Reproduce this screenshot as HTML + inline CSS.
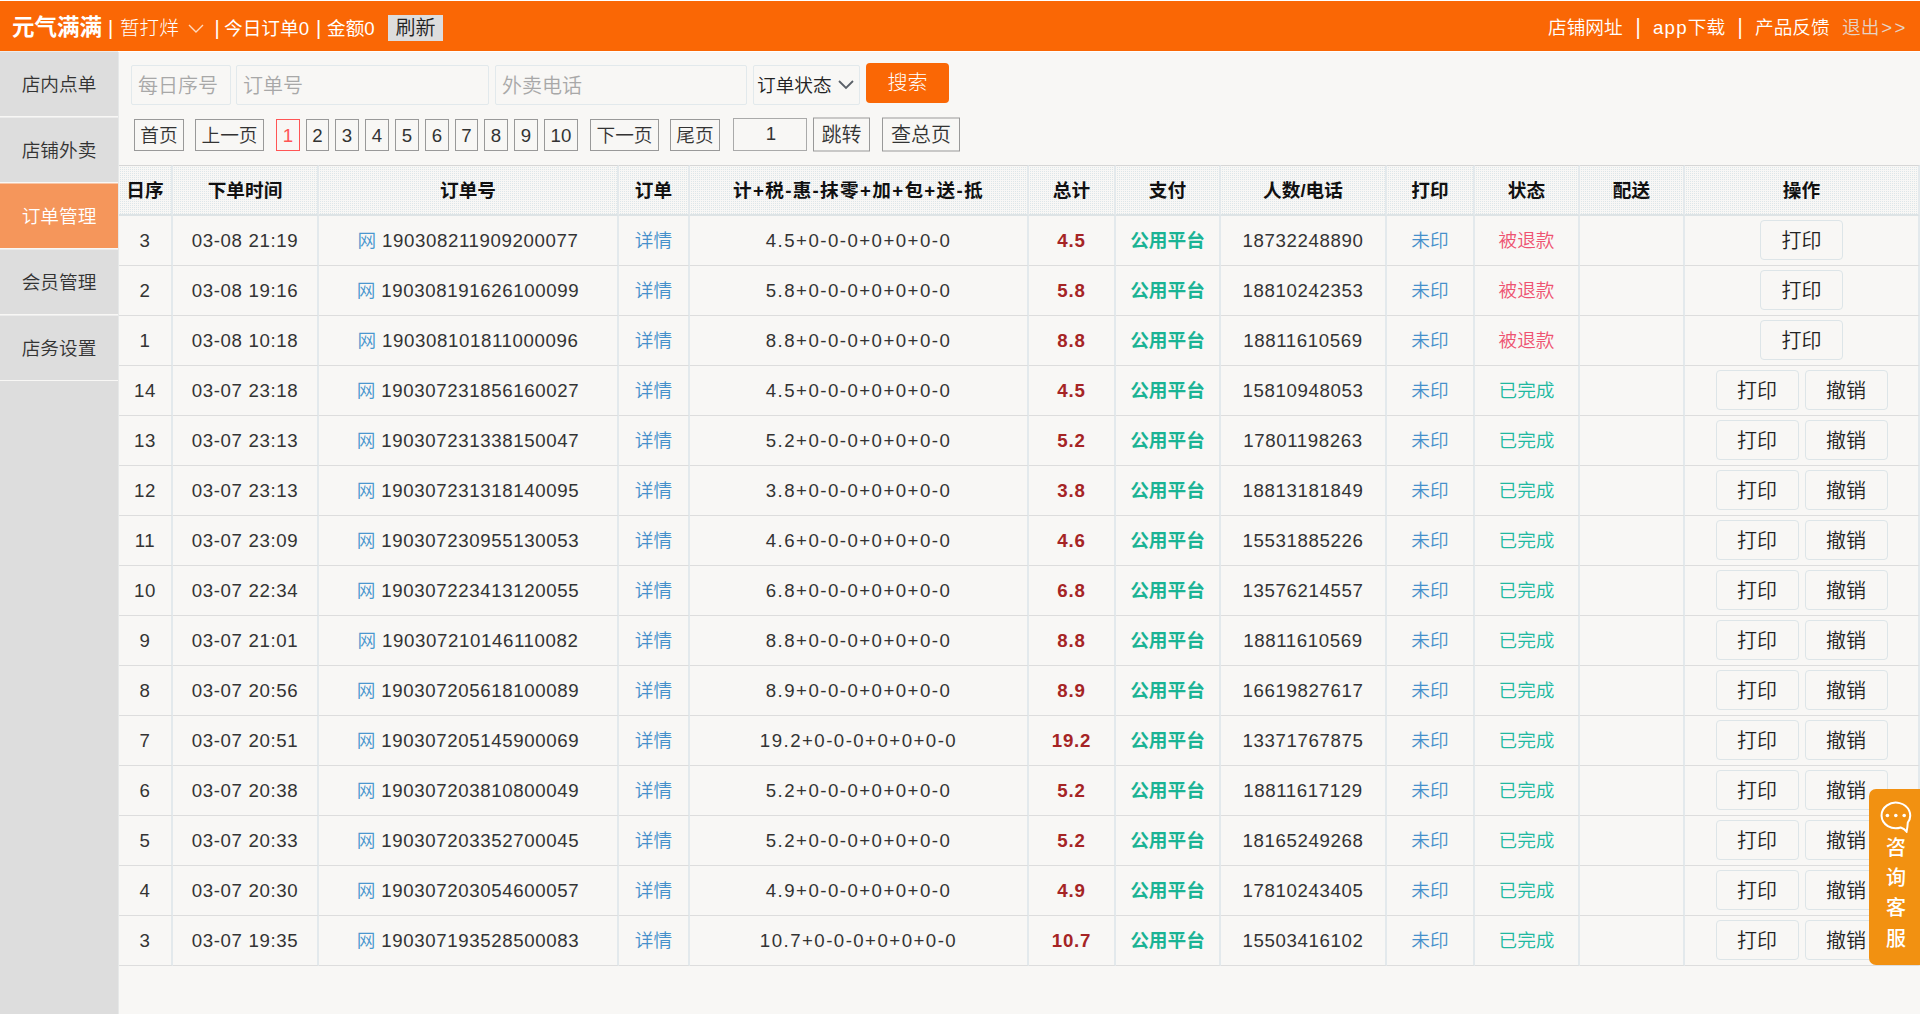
<!DOCTYPE html>
<html lang="zh-CN">
<head>
<meta charset="utf-8">
<title>订单管理</title>
<style>
*{box-sizing:border-box;margin:0;padding:0}
html,body{width:1920px;height:1014px;overflow:hidden}
body{background:#f8f7f5;font-family:"Liberation Sans","Noto Sans CJK SC",sans-serif;font-size:18.67px;font-weight:350;color:#333;position:relative}
.top{position:absolute;left:0;top:0;width:1920px;height:51px;background:#fa6705;border-top:1px solid #fff;color:#fff}
.top span,.top b,.top button,.top svg{position:absolute;white-space:nowrap}
.top .nm{left:12px;top:11px;font-size:22.5px;line-height:32px;font-weight:700}
.top .s1{left:108px;top:11px;line-height:32px;font-size:20px}
.top .st{left:120px;top:11px;line-height:32px;font-size:19.6px;font-weight:300}
.top .s2{left:214.5px;top:11px;line-height:32px;font-size:20px}
.top .td{left:224px;top:12px;line-height:32px;font-weight:400}
.top .s3{left:316px;top:11px;line-height:32px;font-size:20px}
.top .am{left:327px;top:12px;line-height:32px;font-weight:400}
.top .rf{left:388px;top:14px;width:55px;height:26px;background:#ddd;color:#222;border:0;padding:0;font:inherit;font-size:20px;line-height:27px;text-align:center}
.top .r1{margin-top:1px;left:1548px;top:10px;line-height:32px}
.top .r2{margin-top:1px;left:1653px;top:10px;line-height:32px}
.top .r3{margin-top:1px;left:1755px;top:10px;line-height:32px}
.top .r4{margin-top:1px;left:1842px;top:10px;line-height:32px;color:#e6d3c4}
.top .p1{left:1635.5px;top:10px;line-height:32px;font-size:20px;transform:scaleY(1.1);margin-top:-1px}
.top .p2{left:1737.5px;top:10px;line-height:32px;font-size:20px;transform:scaleY(1.1);margin-top:-1px}
.side{position:absolute;left:0;top:51px;width:119px;border-right:1px solid #e6e8e8;height:963px;background:#ddd}
.side a{display:block;height:66px;line-height:66px;text-align:center;border-bottom:1px solid #f8f7f5;border-top:1px solid rgba(255,255,255,.45);color:#333;font-size:18.67px;text-decoration:none}
.side a.on{background:#f5965b;color:#fff}
.main{position:absolute;left:119px;top:52px;width:1801px;height:962px}
.wl{position:absolute;left:118px;top:51px;width:1802px;height:1px;background:#fff}
.in{position:absolute;top:65px;height:40px;border:1px solid #e2e9ec;border-radius:2px;background:#f8f7f5;color:#a8a8a8;font-size:20px;line-height:40px;padding-left:6px;white-space:nowrap}
.sel{color:#222;font-size:18.67px;padding-left:3px}
.sb{position:absolute;left:866px;top:63px;width:83px;font-weight:300;height:40px;background:#fa6705;border:0;border-radius:4px;color:#fff;font:inherit;font-weight:300;font-size:20px;line-height:38px;text-align:center}
.pg{position:absolute;top:119px;height:32px;border:1px solid #999;background:#f8f7f5;color:#333;font-size:18.67px;line-height:32px;text-align:center;white-space:nowrap}
.pg.on{border-color:#f55;color:#f55}
.pb{position:absolute;top:118px;height:34px;transform:translateY(-.5px);font-weight:350;border:1px solid #999;background:#f8f7f5;color:#333;font:inherit;font-size:20px;line-height:31px;text-align:center}
.tb{position:absolute;left:119px;top:165px;width:1801px;border-collapse:separate;border-spacing:0;table-layout:fixed}
.tb th,.tb td{height:50px;line-height:30px;text-align:center;vertical-align:middle;border-right:2px solid #e3e9ec;border-bottom:1px solid #ddd;padding:0;white-space:nowrap;overflow:hidden}
.tb th{height:51px;font-weight:700;color:#111;border-top:1px solid #d6d6d6;border-bottom:2px solid #dde3e5;background-color:#dde6e9;background-image:linear-gradient(to bottom,#f8f7f5 1px,transparent 1px),linear-gradient(to right,#f8f7f5 1px,transparent 1px);background-size:2px 2px,2px 2px}
.tb .n{letter-spacing:.62px}
.tb .f{letter-spacing:1.45px}
.tb th{padding-top:1px}
.tb th.hf{letter-spacing:1.3px}
.w{color:#4a97cf;letter-spacing:0}
.lk{color:#4690cb}
.tt{color:#a52425;font-weight:700;letter-spacing:.8px}
.py{color:#1ab394;font-weight:700}
.tb .rf{color:#ee5270}
.dn{color:#20b9a0}
.ob{width:83px;height:40px;border:1px solid #dde5e8;border-radius:4px;background:#f8f7f5;color:#222;font:inherit;font-size:20px;line-height:40px;padding:0;text-align:center;vertical-align:middle;position:relative;top:-1px}
.o2{margin-left:6px}
.kf{position:absolute;left:1869px;top:789px;width:51px;height:176px;background:#f29111;border-radius:7px 0 0 7px;color:#fff}
.kf svg{position:absolute;left:8px;top:8px}
.kf span{position:absolute;left:16px;width:22px;font-size:20px;line-height:30px;font-weight:500;text-align:center}
.top .r2 i{font-style:normal;letter-spacing:1.2px;position:static}
.top .r4 i{font-style:normal;letter-spacing:2.3px;position:static;margin-left:2px}
.pg.ip{top:118px;height:33px;line-height:30px;border-color:#aaa;padding-left:2px}
</style>
</head>
<body>
<div class="top">
<b class="nm">元气满满</b><span class="s1">|</span><span class="st">暂打烊</span>
<svg style="left:188px;top:23px" width="16" height="10" viewBox="0 0 16 10"><path d="M1 1 L8 8 L15 1" fill="none" stroke="#ffd9bf" stroke-width="1.4"/></svg>
<span class="s2">|</span><span class="td">今日订单0</span><span class="s3">|</span><span class="am">金额0</span>
<button class="rf">刷新</button>
<span class="r1">店铺网址</span><span class="p1">|</span><span class="r2"><i>app</i>下载</span><span class="p2">|</span><span class="r3">产品反馈</span><span class="r4">退出<i>&gt;&gt;</i></span>
</div>
<div class="side"><a>店内点单</a><a>店铺外卖</a><a class="on">订单管理</a><a>会员管理</a><a>店务设置</a></div>
<div class="wl"></div>
<div class="in" style="left:131px;width:100px">每日序号</div>
<div class="in" style="left:236px;width:253px">订单号</div>
<div class="in" style="left:495px;width:252px">外卖电话</div>
<div class="in sel" style="left:753px;width:107px">订单状态<svg style="position:absolute;left:84px;top:14px" width="16" height="10" viewBox="0 0 16 10"><path d="M1 1 L8 8 L15 1" fill="none" stroke="#5a6068" stroke-width="1.8"/></svg></div>
<button class="sb">搜索</button>
<div class="pg" style="left:134px;width:50px">首页</div>
<div class="pg" style="left:195px;width:69px">上一页</div>
<div class="pg on" style="left:276px;width:24px">1</div>
<div class="pg" style="left:306px;width:23px">2</div>
<div class="pg" style="left:335px;width:24px">3</div>
<div class="pg" style="left:365px;width:24px">4</div>
<div class="pg" style="left:395px;width:24px">5</div>
<div class="pg" style="left:425px;width:24px">6</div>
<div class="pg" style="left:455px;width:23px">7</div>
<div class="pg" style="left:484px;width:24px">8</div>
<div class="pg" style="left:514px;width:24px">9</div>
<div class="pg" style="left:544px;width:34px">10</div>
<div class="pg" style="left:590px;width:69px">下一页</div>
<div class="pg" style="left:670px;width:50px">尾页</div>
<div class="pg ip" style="left:733px;width:74px">1</div>
<button class="pb" style="left:813px;width:57px">跳转</button>
<button class="pb" style="left:882px;width:78px">查总页</button>
<table class="tb">
<colgroup><col style="width:54px"><col style="width:146px"><col style="width:300px"><col style="width:71px"><col style="width:339px"><col style="width:87px"><col style="width:105px"><col style="width:166px"><col style="width:88px"><col style="width:105px"><col style="width:105px"><col style="width:235px"></colgroup>
<thead><tr><th>日序</th><th>下单时间</th><th>订单号</th><th>订单</th><th class="hf">计+税-惠-抹零+加+包+送-抵</th><th>总计</th><th>支付</th><th>人数/电话</th><th>打印</th><th>状态</th><th>配送</th><th>操作</th></tr></thead>
<tbody>
<tr><td class="n">3</td><td class="n">03-08 21:19</td><td class="n"><span class="w">网</span> 190308211909200077</td><td><a class="lk">详情</a></td><td class="f">4.5+0-0-0+0+0+0-0</td><td class="tt">4.5</td><td class="py">公用平台</td><td class="n">18732248890</td><td><a class="lk">未印</a></td><td><span class="rf">被退款</span></td><td></td><td class="op"><button class="ob">打印</button></td></tr>
<tr><td class="n">2</td><td class="n">03-08 19:16</td><td class="n"><span class="w">网</span> 190308191626100099</td><td><a class="lk">详情</a></td><td class="f">5.8+0-0-0+0+0+0-0</td><td class="tt">5.8</td><td class="py">公用平台</td><td class="n">18810242353</td><td><a class="lk">未印</a></td><td><span class="rf">被退款</span></td><td></td><td class="op"><button class="ob">打印</button></td></tr>
<tr><td class="n">1</td><td class="n">03-08 10:18</td><td class="n"><span class="w">网</span> 190308101811000096</td><td><a class="lk">详情</a></td><td class="f">8.8+0-0-0+0+0+0-0</td><td class="tt">8.8</td><td class="py">公用平台</td><td class="n">18811610569</td><td><a class="lk">未印</a></td><td><span class="rf">被退款</span></td><td></td><td class="op"><button class="ob">打印</button></td></tr>
<tr><td class="n">14</td><td class="n">03-07 23:18</td><td class="n"><span class="w">网</span> 190307231856160027</td><td><a class="lk">详情</a></td><td class="f">4.5+0-0-0+0+0+0-0</td><td class="tt">4.5</td><td class="py">公用平台</td><td class="n">15810948053</td><td><a class="lk">未印</a></td><td><span class="dn">已完成</span></td><td></td><td class="op"><button class="ob">打印</button><button class="ob o2">撤销</button></td></tr>
<tr><td class="n">13</td><td class="n">03-07 23:13</td><td class="n"><span class="w">网</span> 190307231338150047</td><td><a class="lk">详情</a></td><td class="f">5.2+0-0-0+0+0+0-0</td><td class="tt">5.2</td><td class="py">公用平台</td><td class="n">17801198263</td><td><a class="lk">未印</a></td><td><span class="dn">已完成</span></td><td></td><td class="op"><button class="ob">打印</button><button class="ob o2">撤销</button></td></tr>
<tr><td class="n">12</td><td class="n">03-07 23:13</td><td class="n"><span class="w">网</span> 190307231318140095</td><td><a class="lk">详情</a></td><td class="f">3.8+0-0-0+0+0+0-0</td><td class="tt">3.8</td><td class="py">公用平台</td><td class="n">18813181849</td><td><a class="lk">未印</a></td><td><span class="dn">已完成</span></td><td></td><td class="op"><button class="ob">打印</button><button class="ob o2">撤销</button></td></tr>
<tr><td class="n">11</td><td class="n">03-07 23:09</td><td class="n"><span class="w">网</span> 190307230955130053</td><td><a class="lk">详情</a></td><td class="f">4.6+0-0-0+0+0+0-0</td><td class="tt">4.6</td><td class="py">公用平台</td><td class="n">15531885226</td><td><a class="lk">未印</a></td><td><span class="dn">已完成</span></td><td></td><td class="op"><button class="ob">打印</button><button class="ob o2">撤销</button></td></tr>
<tr><td class="n">10</td><td class="n">03-07 22:34</td><td class="n"><span class="w">网</span> 190307223413120055</td><td><a class="lk">详情</a></td><td class="f">6.8+0-0-0+0+0+0-0</td><td class="tt">6.8</td><td class="py">公用平台</td><td class="n">13576214557</td><td><a class="lk">未印</a></td><td><span class="dn">已完成</span></td><td></td><td class="op"><button class="ob">打印</button><button class="ob o2">撤销</button></td></tr>
<tr><td class="n">9</td><td class="n">03-07 21:01</td><td class="n"><span class="w">网</span> 190307210146110082</td><td><a class="lk">详情</a></td><td class="f">8.8+0-0-0+0+0+0-0</td><td class="tt">8.8</td><td class="py">公用平台</td><td class="n">18811610569</td><td><a class="lk">未印</a></td><td><span class="dn">已完成</span></td><td></td><td class="op"><button class="ob">打印</button><button class="ob o2">撤销</button></td></tr>
<tr><td class="n">8</td><td class="n">03-07 20:56</td><td class="n"><span class="w">网</span> 190307205618100089</td><td><a class="lk">详情</a></td><td class="f">8.9+0-0-0+0+0+0-0</td><td class="tt">8.9</td><td class="py">公用平台</td><td class="n">16619827617</td><td><a class="lk">未印</a></td><td><span class="dn">已完成</span></td><td></td><td class="op"><button class="ob">打印</button><button class="ob o2">撤销</button></td></tr>
<tr><td class="n">7</td><td class="n">03-07 20:51</td><td class="n"><span class="w">网</span> 190307205145900069</td><td><a class="lk">详情</a></td><td class="f">19.2+0-0-0+0+0+0-0</td><td class="tt">19.2</td><td class="py">公用平台</td><td class="n">13371767875</td><td><a class="lk">未印</a></td><td><span class="dn">已完成</span></td><td></td><td class="op"><button class="ob">打印</button><button class="ob o2">撤销</button></td></tr>
<tr><td class="n">6</td><td class="n">03-07 20:38</td><td class="n"><span class="w">网</span> 190307203810800049</td><td><a class="lk">详情</a></td><td class="f">5.2+0-0-0+0+0+0-0</td><td class="tt">5.2</td><td class="py">公用平台</td><td class="n">18811617129</td><td><a class="lk">未印</a></td><td><span class="dn">已完成</span></td><td></td><td class="op"><button class="ob">打印</button><button class="ob o2">撤销</button></td></tr>
<tr><td class="n">5</td><td class="n">03-07 20:33</td><td class="n"><span class="w">网</span> 190307203352700045</td><td><a class="lk">详情</a></td><td class="f">5.2+0-0-0+0+0+0-0</td><td class="tt">5.2</td><td class="py">公用平台</td><td class="n">18165249268</td><td><a class="lk">未印</a></td><td><span class="dn">已完成</span></td><td></td><td class="op"><button class="ob">打印</button><button class="ob o2">撤销</button></td></tr>
<tr><td class="n">4</td><td class="n">03-07 20:30</td><td class="n"><span class="w">网</span> 190307203054600057</td><td><a class="lk">详情</a></td><td class="f">4.9+0-0-0+0+0+0-0</td><td class="tt">4.9</td><td class="py">公用平台</td><td class="n">17810243405</td><td><a class="lk">未印</a></td><td><span class="dn">已完成</span></td><td></td><td class="op"><button class="ob">打印</button><button class="ob o2">撤销</button></td></tr>
<tr><td class="n">3</td><td class="n">03-07 19:35</td><td class="n"><span class="w">网</span> 190307193528500083</td><td><a class="lk">详情</a></td><td class="f">10.7+0-0-0+0+0+0-0</td><td class="tt">10.7</td><td class="py">公用平台</td><td class="n">15503416102</td><td><a class="lk">未印</a></td><td><span class="dn">已完成</span></td><td></td><td class="op"><button class="ob">打印</button><button class="ob o2">撤销</button></td></tr>
</tbody>
</table>
<div class="kf">
<svg width="36" height="36" viewBox="0 0 36 36"><path d="M23.7 30.5 A14.3 12.8 0 1 1 30.8 25.5 C30.6 29 30.2 32 29.6 34.6 C28 32.4 26 31.2 23.7 30.5 Z" fill="none" stroke="#fff" stroke-width="2"/><circle cx="10.4" cy="18.5" r="1.8" fill="#fff"/><circle cx="18.8" cy="18.5" r="1.8" fill="#fff"/><circle cx="27.2" cy="18.5" r="1.8" fill="#fff"/></svg>
<span style="top:44px">咨</span><span style="top:74px">询</span><span style="top:104px">客</span><span style="top:135px">服</span>
</div>
</body>
</html>
